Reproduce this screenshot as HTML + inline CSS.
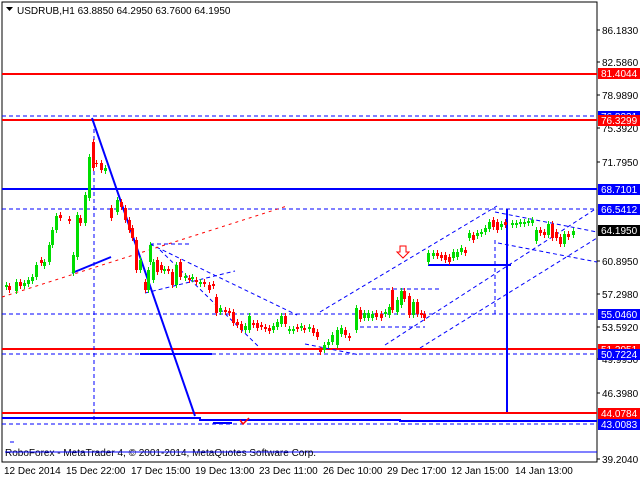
<!DOCTYPE html>
<html><head><meta charset="utf-8"><style>
body{margin:0;background:#fff;width:640px;height:480px;overflow:hidden;font-family:"Liberation Sans",sans-serif}
svg{position:absolute;left:0;top:0}
text{font-family:"Liberation Sans",sans-serif;font-size:10px}
</style></head><body>
<svg id="s" width="640" height="480" xmlns="http://www.w3.org/2000/svg">
<rect x="2" y="2" width="595" height="460" fill="#fff" stroke="#000" stroke-width="1"/>
<g stroke-width="2" fill="none">
<line x1="2" y1="74" x2="597" y2="74" stroke="#f00"/>
<line x1="2" y1="120" x2="597" y2="120" stroke="#f00"/>
<line x1="2" y1="349" x2="597" y2="349" stroke="#f00"/>
<line x1="2" y1="413" x2="597" y2="413" stroke="#f00"/>
<line x1="2" y1="189" x2="597" y2="189" stroke="#00f"/>
<polyline points="2,418 200,418 200,420 400,420 400,421 597,421" stroke="#00f"/>
<line x1="92" y1="118" x2="195" y2="416" stroke="#00f"/>
<line x1="72" y1="273" x2="111" y2="257" stroke="#00f"/>
<line x1="140" y1="354" x2="212" y2="354" stroke="#00f"/>
<line x1="507" y1="209" x2="507" y2="412" stroke="#00f"/>
<line x1="428" y1="265" x2="511" y2="265" stroke="#00f"/>
<line x1="213" y1="423" x2="232" y2="423" stroke="#00f"/>
</g>
<g stroke="#00f" stroke-width="1" stroke-dasharray="4,3" fill="none">
<line x1="2" y1="116" x2="597" y2="116"/>
<line x1="2" y1="209" x2="597" y2="209"/>
<line x1="2" y1="314" x2="597" y2="314"/>
<line x1="2" y1="354" x2="597" y2="354"/>
<line x1="2" y1="424" x2="597" y2="424"/>
<line x1="94" y1="122" x2="94" y2="420"/>
<line x1="495" y1="240" x2="495" y2="314"/>
<line x1="320" y1="312" x2="497" y2="206"/>
<line x1="385" y1="345" x2="597" y2="208"/>
<line x1="420" y1="348" x2="597" y2="238"/>
<line x1="495" y1="212" x2="597" y2="232"/>
<line x1="498" y1="243" x2="597" y2="262"/>
<line x1="150" y1="244" x2="190" y2="244"/>
<line x1="150" y1="244" x2="297" y2="315"/>
<line x1="160" y1="250" x2="260" y2="348"/>
<line x1="145" y1="293" x2="235" y2="271"/>
<line x1="305" y1="344" x2="360" y2="355"/>
<line x1="372" y1="289" x2="440" y2="289"/>
<line x1="360" y1="327" x2="425" y2="327"/>
<line x1="10" y1="442" x2="16" y2="442"/>
</g>
<polyline points="2,297 287,206" stroke="#f00" stroke-dasharray="3,4" fill="none"/>
<path d="M400,246h6v6h3l-6,6-6-6h3z" fill="#fff" stroke="#f00"/>
<path d="M240,420l3,4 6,-6" stroke="#f00" stroke-width="1.5" fill="none"/>
<line x1="300" y1="452" x2="597" y2="452" stroke="#00f" stroke-width="1"/>
<g id="c"></g>
<text x="17" y="14" fill="#000">USDRUB,H1  63.8850 64.2950 63.7600 64.1950</text>
<path d="M6,7h7l-3.5,4z" fill="#000"/>
<text x="5" y="456" fill="#000" font-size="9.5">RoboForex - MetaTrader 4, © 2001-2014, MetaQuotes Software Corp.</text>
<line x1="5" y1="452" x2="300" y2="452" stroke="#00f" stroke-width="1"/>
<g fill="#000">
<text x="4" y="474">12 Dec 2014</text><text x="66" y="474">15 Dec 22:00</text><text x="131" y="474">17 Dec 15:00</text><text x="195" y="474">19 Dec 13:00</text><text x="259" y="474">23 Dec 11:00</text><text x="323" y="474">26 Dec 10:00</text><text x="387" y="474">29 Dec 17:00</text><text x="451" y="474">12 Jan 15:00</text><text x="515" y="474">14 Jan 13:00</text>
</g>
<g id="ax"></g>
</svg>
<script>
var c=[[5,285,287,'g'],[8,286,290,'r'],[15,282,291,'g'],[19,282,286,'r'],[23,283,286,'g'],[27,280,284,'g'],[31,277,281,'g'],[35,265,277,'g'],[40,260,263,'r'],[43,262,266,'g'],[48,245,262,'g'],[51,230,245,'g'],[55,216,230,'g'],[59,215,218,'r'],[68,219,221,'r'],[72,255,273,'g'],[76,215,257,'g'],[79,218,223,'r'],[84,195,223,'g'],[88,157,198,'g'],[92,142,168,'r'],[95,163,164,'r'],[100,163,170,'r'],[104,168,171,'g'],[110,208,218,'r'],[116,200,212,'g'],[120,202,207,'r'],[124,208,220,'r'],[128,220,230,'r'],[131,228,238,'r'],[135,240,270,'r'],[139,260,270,'g'],[144,282,290,'r'],[147,270,290,'g'],[149,245,262,'g'],[152,262,280,'g'],[156,260,272,'r'],[160,265,270,'r'],[163,269,271,'g'],[167,269,271,'r'],[171,272,285,'r'],[175,265,285,'g'],[179,262,277,'r'],[184,276,278,'g'],[188,278,280,'r'],[191,277,279,'g'],[195,280,282,'r'],[199,282,284,'g'],[203,282,284,'r'],[208,285,290,'r'],[212,284,286,'r'],[215,297,313,'r'],[219,308,312,'g'],[224,310,312,'r'],[228,311,313,'r'],[232,312,323,'r'],[236,322,325,'r'],[240,324,330,'r'],[244,326,330,'g'],[248,316,330,'g'],[252,323,325,'r'],[256,323,328,'r'],[260,325,327,'r'],[264,327,329,'r'],[268,328,331,'r'],[272,326,330,'g'],[276,322,327,'g'],[280,316,324,'g'],[284,316,324,'r'],[288,329,331,'g'],[292,329,331,'g'],[296,327,329,'r'],[300,326,328,'g'],[303,328,330,'r'],[308,327,329,'g'],[312,328,333,'r'],[316,332,337,'r'],[319,350,352,'r'],[323,345,350,'g'],[327,342,345,'g'],[331,335,342,'g'],[336,330,345,'g'],[340,328,334,'g'],[344,330,335,'r'],[348,336,338,'r'],[355,308,330,'g'],[359,310,319,'r'],[363,313,318,'g'],[367,313,318,'g'],[371,314,318,'g'],[375,313,317,'r'],[380,314,318,'r'],[384,312,314,'g'],[388,307,315,'g'],[391,290,310,'r'],[396,300,312,'g'],[400,291,305,'g'],[403,291,299,'r'],[408,296,315,'r'],[412,302,315,'g'],[416,302,314,'r'],[420,313,315,'r'],[423,314,318,'r'],[427,253,262,'g'],[432,253,256,'g'],[436,253,256,'r'],[440,255,258,'r'],[444,255,260,'r'],[448,257,262,'r'],[452,252,258,'g'],[456,252,257,'g'],[460,248,252,'g'],[464,250,253,'r'],[468,233,238,'g'],[472,235,240,'r'],[476,233,236,'g'],[480,232,234,'g'],[484,228,232,'g'],[488,222,229,'g'],[492,220,227,'r'],[496,222,230,'r'],[500,224,227,'g'],[504,222,225,'r'],[511,223,225,'g'],[515,223,225,'g'],[519,222,224,'g'],[523,222,224,'g'],[527,221,223,'g'],[531,220,223,'g'],[535,230,241,'g'],[539,230,233,'r'],[543,232,235,'r'],[547,224,235,'g'],[551,224,238,'r'],[555,232,238,'r'],[559,237,244,'r'],[563,234,244,'g'],[567,234,237,'r'],[572,231,235,'g']];
var h='';c.forEach(function(k){var col=k[3]=='g'?'#0d0':'#f00';h+='<line x1="'+(k[0]+1.5)+'" y1="'+(k[1]-3)+'" x2="'+(k[0]+1.5)+'" y2="'+(k[2]+3)+'" stroke="'+col+'"/><rect x="'+k[0]+'" y="'+k[1]+'" width="3" height="'+Math.max(1,k[2]-k[1])+'" fill="'+col+'"/>';});
document.getElementById('c').innerHTML=h;
var a=[[30,'86.1830'],[62,'82.5860'],[95,'78.9890'],[128,'75.3920'],[162,'71.7950'],[261,'60.8950'],[294,'57.2980'],[327,'53.5920'],[359,'49.9950'],[393,'46.3980'],[459,'39.2040']];
var b=[[116,'76.8231','#00f'],[120,'76.3299','#f00'],[73,'81.4044','#f00'],[189,'68.7101','#00f'],[209,'66.5412','#00f'],[230,'64.1950','#000'],[314,'55.0460','#00f'],[349,'51.2051','#f00'],[354,'50.7224','#00f'],[413,'44.0784','#f00'],[424,'43.0083','#00f']];
var t='';a.forEach(function(k){t+='<line x1="597" y1="'+k[0]+'" x2="600" y2="'+k[0]+'" stroke="#000"/><text x="602" y="'+(k[0]+4)+'">'+k[1]+'</text>';});
b.forEach(function(k){t+='<rect x="598" y="'+(k[0]-5)+'" width="42" height="11" fill="'+k[2]+'"/><text x="601" y="'+(k[0]+4)+'" fill="#fff">'+k[1]+'</text>';});
document.getElementById('ax').innerHTML=t;
</script>
</body></html>
